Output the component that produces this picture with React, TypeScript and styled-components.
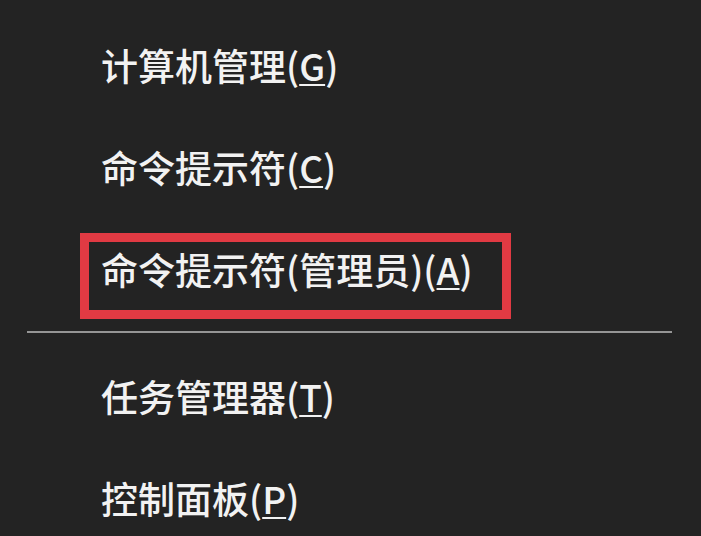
import styled, { createGlobalStyle } from "styled-components";

const GlobalStyle = createGlobalStyle`
    html, body {
        margin: 0;
        padding: 0;
        background: #232323;
    }
    body {
        width: 701px;
        height: 536px;
        overflow: hidden;
        font-family: "Noto Sans CJK SC", "Noto Sans", sans-serif;
    }
`;

type Item = { label: string; key: string; highlighted?: boolean };

const topItems: Item[] = [
    { label: "计算机管理", key: "G" },
    { label: "命令提示符", key: "C" },
    { label: "命令提示符(管理员)", key: "A", highlighted: true },
];

const bottomItems: Item[] = [
    { label: "任务管理器", key: "T" },
    { label: "控制面板", key: "P" },
];

const App = () => {
    const renderItem = (item: Item) => (
        <MenuItem key={item.label + item.key} $highlighted={item.highlighted}>
            {item.label}(<Mnemonic>{item.key}</Mnemonic>)
        </MenuItem>
    );

    return (
        <>
            <GlobalStyle />
            <Menu>
                {topItems.map(renderItem)}
                <Separator />
                {bottomItems.map(renderItem)}
            </Menu>
        </>
    );
};

const Menu = styled.div`
    display: flex;
    flex-direction: column;
    width: 100%;
    padding-top: 14px;
    box-sizing: border-box;
    background: #232323;
`;

const MenuItem = styled.div<{ $highlighted?: boolean }>`
    position: relative;
    flex-shrink: 0;
    display: flex;
    align-items: center;
    height: 102px;
    padding-left: 101px;
    font-size: 37px;
    font-weight: 500;
    line-height: 1;
    color: #f2f2f2;
    white-space: nowrap;
    &::after {
        content: "";
        display: ${({ $highlighted }) => ($highlighted ? "block" : "none")};
        position: absolute;
        left: 80px;
        top: 15px;
        width: 431px;
        height: 86px;
        box-sizing: border-box;
        border: 9px solid #e13a43;
    }
`;

const Mnemonic = styled.span`
    text-decoration: underline;
    text-decoration-thickness: 2px;
    text-underline-offset: 3px;
`;

const Separator = styled.div`
    flex-shrink: 0;
    height: 2px;
    margin: 11px 29px 12px 27px;
    background: #959595;
`;

export default App;
